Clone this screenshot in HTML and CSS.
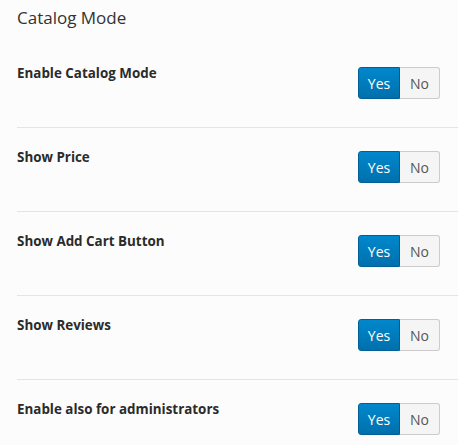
FILE: index.html
```html
<!DOCTYPE html>
<html>
<head>
<meta charset="utf-8">
<link rel="stylesheet" href="styles.css">
</head>
<body>
<div class="panel">
  <h2 class="title">Catalog Mode</h2>
  <div class="row">
    <div class="label">Enable Catalog Mode</div>
    <div class="toggle"><span class="opt on">Yes</span><span class="opt off">No</span></div>
  </div>
  <div class="row">
    <div class="label">Show Price</div>
    <div class="toggle"><span class="opt on">Yes</span><span class="opt off">No</span></div>
  </div>
  <div class="row">
    <div class="label">Show Add Cart Button</div>
    <div class="toggle"><span class="opt on">Yes</span><span class="opt off">No</span></div>
  </div>
  <div class="row">
    <div class="label">Show Reviews</div>
    <div class="toggle"><span class="opt on">Yes</span><span class="opt off">No</span></div>
  </div>
  <div class="row last">
    <div class="label">Enable also for administrators</div>
    <div class="toggle"><span class="opt on">Yes</span><span class="opt off">No</span></div>
  </div>
</div>
</body>
</html>
```
FILE: styles.css
```css
html, body {
  margin: 0;
  padding: 0;
  background: #fcfcfc;
}
body {
  font-family: "Open Sans", "Segoe UI", "Liberation Sans", sans-serif;
  color: #333;
}
.panel {
  padding-left: 17px;
}
.title {
  margin: 0;
  height: 44px;
  box-sizing: border-box;
  padding-top: 6px;
  font-size: 17px;
  font-weight: 400;
  line-height: 24px;
  color: #333;
}
.row {
  display: flex;
  justify-content: space-between;
  align-items: flex-start;
  padding: 23px 18px 28px 0;
  border-bottom: 1px solid #e4e4e4;
}
.row.last {
  border-bottom: none;
}
.label {
  font-size: 13.4px;
  font-weight: 700;
  line-height: 18px;
  margin-top: -3px;
  color: #2b2b2b;
}
.toggle {
  display: flex;
  height: 32px;
  width: 82px;
}
.opt {
  display: flex;
  align-items: center;
  justify-content: center;
  box-sizing: border-box;
  height: 32px;
  font-size: 14px;
}
.opt.on {
  width: 42px;
  color: #fff;
  background: linear-gradient(#0088cc, #0070ad);
  border: 1px solid #005f94;
  border-radius: 3px 0 0 3px;
}
.opt.off {
  width: 40px;
  color: #555;
  background: #f5f5f5;
  border: 1px solid #cccccc;
  border-left: none;
  border-radius: 0 3px 3px 0;
}
```
